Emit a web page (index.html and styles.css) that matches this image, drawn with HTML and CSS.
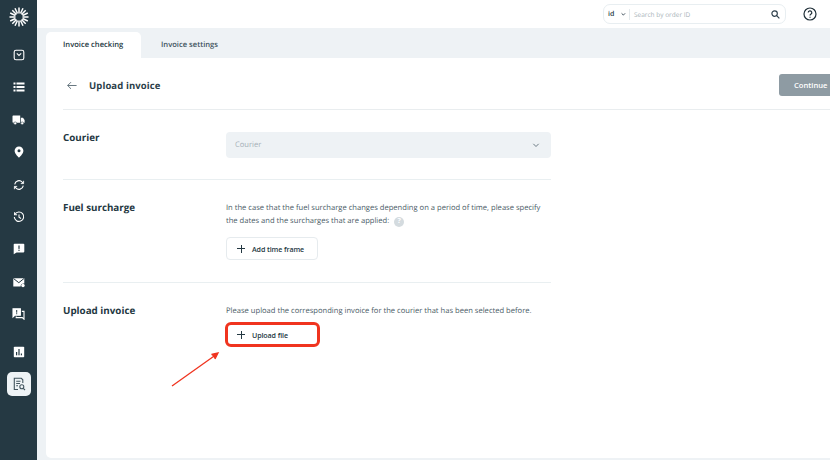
FILE: index.html
```html
<!DOCTYPE html>
<html lang="en">
<head>
<meta charset="utf-8">
<title>Upload invoice</title>
<link rel="stylesheet" href="styles.css">
</head>
<body>
<div class="app">
  <nav class="sidebar">
    <svg class="logo" viewBox="0 0 20 20" width="20" height="20" fill="none" stroke="#fff" stroke-width="1.500">
      <path d="M10 0.500V6.500M10 13.500V19.500M0.500 10H6.500M13.500 10H19.500M3.300 3.300L7.500 7.500M12.500 12.500L16.700 16.700M16.700 3.300L12.500 7.500M7.500 12.500L3.300 16.700M6 1.200L8.500 6.500M14 1.200L11.500 6.500M6 18.800L8.500 13.500M14 18.800L11.500 13.500M1.200 6L6.500 8.500M1.200 14L6.500 11.500M18.800 6L13.500 8.500M18.800 14L13.500 11.500"/>
    </svg>
    <div class="nav-list">
      <span class="nav-item"><svg viewBox="0 0 12 12" width="12" height="12" fill="none" stroke="#fff" stroke-width="1.100"><rect x="1.200" y="1.200" width="9.600" height="9.600" rx="1.800"/><path d="M3.800 4.400L6 6.400L8.200 4.400"/></svg></span>
      <span class="nav-item"><svg viewBox="0 0 12 12" width="12" height="12" fill="#fff"><rect x="0.500" y="1.500" width="2" height="2"/><rect x="0.500" y="5" width="2" height="2"/><rect x="0.500" y="8.500" width="2" height="2"/><rect x="3.500" y="1.500" width="8" height="2"/><rect x="3.500" y="5" width="8" height="2"/><rect x="3.500" y="8.500" width="8" height="2"/></svg></span>
      <span class="nav-item"><svg viewBox="0 0 13 12" width="13" height="12" fill="#fff"><path d="M0.500 2.200a.7.700 0 0 1 .7-.7H8.200V8.800H1.200a.7.700 0 0 1-.7-.7Z"/><path d="M8.900 3.800H11L12.600 6V8.800H8.900Z"/><circle cx="3.200" cy="9.300" r="1.400" stroke="#253943" stroke-width=".5"/><circle cx="10.200" cy="9.300" r="1.400" stroke="#253943" stroke-width=".5"/></svg></span>
      <span class="nav-item"><svg viewBox="0 0 12 12" width="12" height="12"><path fill="#fff" d="M6 .4a4.400 4.400 0 0 0-4.400 4.400C1.600 8 6 11.700 6 11.700S10.400 8 10.400 4.800A4.400 4.400 0 0 0 6 .4Z"/><circle cx="6" cy="4.800" r="1.500" fill="#253943"/></svg></span>
      <span class="nav-item"><svg viewBox="0 0 12 12" width="12" height="12" fill="none" stroke="#fff" stroke-width="1.100"><path d="M1.700 5.300A4.300 4.300 0 0 1 9.200 3.200L10.400 4.400M10.300 6.700A4.300 4.300 0 0 1 2.800 8.800L1.600 7.600"/><path d="M10.600 1.800V4.600H7.800M1.400 10.200V7.400H4.200" stroke-width=".9"/></svg></span>
      <span class="nav-item"><svg viewBox="0 0 12 12" width="12" height="12" fill="none" stroke="#fff" stroke-width="1.100"><path d="M2 3.200A4.700 4.700 0 1 1 1.300 6"/><path d="M1.600 1.200V3.700H4.100M6 3.400V6.300L8 7.500"/></svg></span>
      <span class="nav-item"><svg viewBox="0 0 12 12" width="12" height="12"><path fill="#fff" d="M1.500.8h9a.8.800 0 0 1 .8.800v7a.8.800 0 0 1-.8.800H3.600L.7 11.300V1.600a.8.800 0 0 1 .8-.8Z"/><rect x="5.400" y="2.500" width="1.200" height="3.400" fill="#253943"/><rect x="5.400" y="6.700" width="1.200" height="1.200" fill="#253943"/></svg></span>
      <span class="nav-item"><svg viewBox="0 0 12 12" width="12" height="12"><path fill="#fff" d="M.3 2.200h11v5.300a3 3 0 0 0-3.700 3H.3Z"/><path fill="none" stroke="#253943" stroke-width="1" d="M.5 2.500L5.800 6.700L11 2.500"/><circle cx="10" cy="9.500" r="1.700" fill="#fff"/></svg></span>
      <span class="nav-item"><svg viewBox="0 0 13 12" width="13" height="12" fill="none" stroke="#fff" stroke-width="1.100"><path fill="#fff" d="M1 .8h7.400v6.400H3L1 9Z"/><path d="M9.800 3.400H12V11.200L10.300 9.600H4.200V8.500"/><rect x="4.200" y="2" width="1" height="2.700" fill="#253943" stroke="none"/><rect x="4.200" y="5.200" width="1" height="1" fill="#253943" stroke="none"/></svg></span>
      <span class="nav-item nav-chart"><svg viewBox="0 0 12 12" width="12" height="12"><rect x=".8" y=".8" width="10.400" height="10.400" rx=".8" fill="#fff"/><rect x="3" y="6" width="1.200" height="3.300" fill="#253943"/><rect x="5.400" y="3" width="1.200" height="6.300" fill="#253943"/><rect x="7.800" y="7.500" width="1.200" height="1.800" fill="#253943"/></svg></span>
      <span class="nav-item nav-active"><svg viewBox="0 0 14 14" width="14" height="14" fill="none" stroke="#42555f" stroke-width="1.100"><path d="M6 12.500H2.300V1.300H9.300L10.800 2.800V6"/><path d="M4.200 4.300H8.500M4.200 6.500H8M4.200 8.700H6"/><circle cx="9.800" cy="9.800" r="2"/><path d="M11.300 11.300L13 13"/></svg></span>
    </div>
  </nav>
  <div class="main">
    <header class="topbar">
      <div class="search">
        <span class="search-scope">id<svg viewBox="0 0 8 6" width="7" height="5" fill="none" stroke="#2c3e4a" stroke-width="1.500"><path d="M1 1L4 4L7 1"/></svg></span>
        <span class="search-input">Search by order ID</span>
        <svg viewBox="0 0 10 10" width="9" height="9" fill="none" stroke="#2c3e4a" stroke-width="1.300"><circle cx="4" cy="4" r="3"/><path d="M6.300 6.300L9.300 9.300"/></svg>
      </div>
      <svg class="help" viewBox="0 0 14 14" width="14" height="14" fill="none" stroke="#1f2f38" stroke-width="1.200"><circle cx="7" cy="7" r="6"/><path d="M5.200 5.500A1.800 1.800 0 1 1 7.800 7.200C7.200 7.600 7 7.900 7 8.600"/><path d="M7 9.700V10.700"/></svg>
    </header>
    <div class="workspace">
      <div class="tabs">
        <span class="tab tab-active">Invoice checking</span>
        <span class="tab">Invoice settings</span>
      </div>
      <section class="panel">
        <div class="page-head">
          <div class="title-group">
            <svg viewBox="0 0 12 10" width="10" height="9" fill="none" stroke="#5a6b75" stroke-width="1.100"><path d="M11.500 5H.8M4.800 1L.8 5L4.800 9"/></svg>
            <h1 class="page-title">Upload invoice</h1>
          </div>
          <button class="continue">Continue</button>
        </div>
        <div class="row row-courier">
          <h2 class="row-label">Courier</h2>
          <div class="row-body">
            <div class="select">
              <span>Courier</span>
              <svg viewBox="0 0 8 6" width="8" height="5" fill="none" stroke="#5f707a" stroke-width="1.100"><path d="M.8 1L4 4.200L7.200 1"/></svg>
            </div>
          </div>
        </div>
        <div class="row row-fuel">
          <h2 class="row-label">Fuel surcharge</h2>
          <div class="row-body">
            <p class="desc">In the case that the fuel surcharge changes depending on a period of time, please specify<br>the dates and the surcharges that are applied:<span class="hint">?</span></p>
            <button class="add-btn"><span class="plus"></span>Add time frame</button>
          </div>
        </div>
        <div class="row row-upload">
          <h2 class="row-label">Upload invoice</h2>
          <div class="row-body">
            <p class="desc">Please upload the corresponding invoice for the courier that has been selected before.</p>
            <button class="add-btn upload-btn"><span class="plus"></span>Upload file</button>
          </div>
        </div>
        <svg class="arrow" viewBox="0 0 50 36" width="50" height="36" fill="none" stroke="#f0341f" stroke-width="1.300"><path d="M1 34L46 2"/><path d="M40.500 2.500L47 1L44 7" fill="#f0341f"/></svg>
      </section>
    </div>
  </div>
</div>
</body>
</html>
```
FILE: styles.css
```css
* { box-sizing: border-box; }
html, body { margin: 0; height: 100%; overflow: hidden; }
body { font-family: "Open Sans", "Noto Sans", sans-serif; color: #243842; background: #fff; text-rendering: geometricPrecision; }
.app { display: flex; width: 830px; height: 460px; }

.sidebar { width: 37px; flex: none; background: #253943; display: flex; flex-direction: column; align-items: center; padding-top: 7px; }
.logo { flex: none; }
.nav-list { display: flex; flex-direction: column; align-items: center; gap: 8.400px; margin-top: 16px; }
.nav-item { width: 24px; height: 24px; display: flex; align-items: center; justify-content: center; border-radius: 5px; }
.nav-chart { margin-top: 5.500px; }
.nav-active { background: #eef3f6; }

.main { flex: 1; min-width: 0; display: flex; flex-direction: column; }
.topbar { height: 28px; flex: none; display: flex; align-items: center; justify-content: flex-end; padding: 0 13px 0 0; gap: 17px; }
.search { width: 183px; height: 20px; border: 1px solid #e8eef1; border-radius: 7px; display: flex; align-items: center; padding: 0 5px 0 4px; }
.search-scope { display: flex; align-items: center; gap: 7px; font-size: 7px; font-weight: 600; padding: 0 3px 0 0; height: 11px; border-right: 1px solid #e3e9ec; width: 22px; flex: none; }
.search-input { flex: 1; font-size: 6.500px; color: #a9b3b9; padding-left: 4px; }
.help { flex: none; }

.workspace { flex: 1; min-height: 0; background: #eef2f5; padding: 4px 0 2px 9px; display: flex; flex-direction: column; }
.tabs { display: flex; height: 26px; flex: none; }
.tab { display: flex; align-items: center; padding-left: 20px; font-size: 7.600px; font-weight: 600; color: #42545f; border-radius: 5px 5px 0 0; }
.tab-active { width: 95px; padding-left: 17px; background: #fff; color: #243842; }
.panel { position: relative; flex: 1; background: #fff; border-radius: 0 0 0 5px; padding: 0 0 0 17px; }

.page-head { height: 52px; padding-top: 4px; display: flex; align-items: center; justify-content: space-between; border-bottom: 1px solid #e9edef; }
.title-group { display: flex; align-items: center; gap: 12px; padding-left: 4px; }
.page-title { margin: 0; font-size: 9.500px; font-weight: 700; color: #2b3e49; letter-spacing: .1px; }
.continue { width: 51px; height: 22px; margin-top: -2px; padding: 0 0 0 15px; border: 0; border-radius: 3px 0 0 3px; background: #8e9ba3; color: #fff; font: 600 7.600px "Open Sans", sans-serif; text-align: left; white-space: nowrap; overflow: hidden; }

.row { display: flex; margin-right: 279px; }
.row-label { width: 163px; flex: none; margin: -1px 0 0; font-size: 9.800px; font-weight: 700; color: #243842; line-height: 14px; }
.row-body { flex: 1; min-width: 0; }
.row-courier { padding-top: 22px; height: 70px; border-bottom: 1px solid #e9eff1; }
.row-fuel { padding-top: 22px; height: 103px; border-bottom: 1px solid #e9eff1; }
.row-upload { padding-top: 22px; }

.select { height: 26px; border-radius: 4px; background: #eef2f5; display: flex; align-items: center; justify-content: space-between; padding: 0 11px 0 9px; font-size: 7.600px; color: #a5b0b7; }
.desc { margin: 0; font-size: 7.600px; line-height: 13px; color: #4a5b66; white-space: nowrap; }
.hint { display: inline-flex; align-items: center; justify-content: center; width: 10px; height: 10px; margin-left: 5px; border-radius: 50%; background: #d4dbdf; color: #fff; font-size: 7px; font-weight: 700; }

.add-btn { display: flex; align-items: center; gap: 7px; width: 92px; height: 23px; margin-top: 9px; padding: 0 0 0 10px; border: 1px solid #e6ebee; border-radius: 4px; background: #fff; color: #243842; font: 600 7.100px "Open Sans", sans-serif; letter-spacing: -.1px; }
.plus { width: 8px; height: 8px; flex: none; background: linear-gradient(#243842, #243842) center / 8px 1px no-repeat, linear-gradient(#243842, #243842) center / 1px 8px no-repeat; }
.upload-btn { margin-top: 4px; margin-left: -1px; border: 3px solid #f0341f; border-radius: 6px; height: 25px; width: 95px; padding-left: 9px; gap: 7px; }

.arrow { position: absolute; left: 125px; top: 294px; }
```
